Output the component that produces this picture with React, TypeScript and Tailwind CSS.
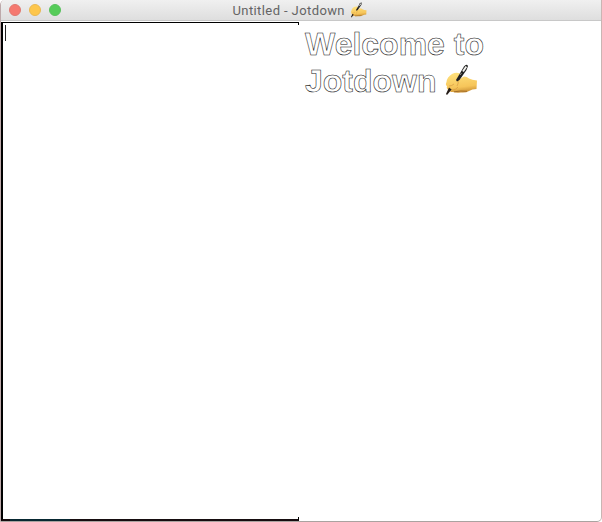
type HandProps = { className?: string; id: string };

function WritingHand({ className, id }: HandProps) {
  return (
    <svg viewBox="0 0 34 32" className={className} strokeWidth="1" aria-label="Writing hand">
      <defs>
        <linearGradient id={id} x1="0.4" y1="0" x2="0.6" y2="1">
          <stop offset="0" stopColor="#ffe17c" />
          <stop offset="0.7" stopColor="#f6c55a" />
          <stop offset="1" stopColor="#c88d32" />
        </linearGradient>
      </defs>
      <path
        d="M2.5 18 Q3 13 8 10 Q12 8 16 9.5 Q18 12 14 15 L12 17 Q17 14 20 12.5 Q23 12.5 25 14.5 Q28 16 33 16.5 L32.5 25 Q28 25 25 27 Q22 29 17 28.5 Q12 29 9 28 Q5 28 5 26 Q2 25 3 22 Q1 21 2.5 18Z"
        fill={`url(#${id})`}
      />
      <path d="M5 22 Q8 22 10 20 M8 26 Q12 26 14 23 M14 16 Q15 19 13 22" fill="none" stroke="#d79b42" strokeWidth="0.7" />
      <path d="M10 27.8 Q17 26.5 23 27.3" fill="none" stroke="#9e6927" strokeWidth="0.9" />
      <path d="M13 17.5 L12 16 L20 2.5 Q22.5 -0.5 24 2 L22.5 6 L15.5 16Z" fill="#202020" />
      <path d="M19 7.5 L22.3 2.5" stroke="#f4f4f0" strokeWidth="1.9" />
      <path d="M17.5 9 L16 11" stroke="#e4e1dc" strokeWidth="0.6" />
      <path d="M5 23.5 L7.6 25.5 L3 31 L2 30Z" fill="#251d18" />
    </svg>
  );
}

export default function App() {
  return (
    <main className="flex h-[522px] w-[602px] flex-col overflow-hidden rounded-tl-[5px] rounded-br-[5px] border-b border-l border-r border-b-[#aaa3a0] border-l-[#bda9aa] border-r-[#c9b5b3] bg-white font-['Liberation_Sans',sans-serif]">
      <header className="grid h-[21px] shrink-0 grid-cols-[1fr_auto_1fr] border-b border-[#c8c8c8] bg-linear-to-b from-[#f0f0f0] to-[#dedede]">
        <div className="flex gap-2 pt-1 pl-2">
          <span className="size-3 rounded-full border border-[#df786f] bg-[#f57970]" />
          <span className="size-3 rounded-full border border-[#e9b850] bg-[#fdc64b]" />
          <span className="size-3 rounded-full border border-[#58c05c] bg-[#55cc59]" />
        </div>
        <div className="-ml-[3px] flex pt-[2px] text-[13px] leading-[17px] text-[#646464]">
          <span className="w-[117px] whitespace-nowrap font-[Roboto,sans-serif] tracking-[0.4px]">Untitled - Jotdown</span>
          <WritingHand className="h-4 w-[17px]" id="titleHand" />
        </div>
      </header>
      <div className="flex min-h-0 flex-1">
        <section className="relative mt-px w-[298px] border-t border-b-2 border-l-2 border-t-black border-b-[#160d10] border-l-black pt-[2px] pl-[2px]">
          <div className="h-4 w-px bg-[#222]" />
          <span className="absolute top-0 right-0 h-[2px] w-px bg-black" />
          <span className="absolute right-0 -bottom-[1px] h-[3px] w-px bg-black" />
          <span className="absolute -bottom-[2px] left-[7px] h-[2px] w-[60px] bg-[#082832]" />
        </section>
        <section className="flex-1 pt-[5px] pl-[6px]">
          <h1 className="text-[32px] leading-[37px] font-bold whitespace-nowrap text-white [-webkit-text-stroke:0.55px_#111]">
            Welcome to
            <span className="flex">
              <span className="w-[139px]">Jotdown</span>
              <WritingHand className="mt-px h-8 w-[34px]" id="headingHand" />
            </span>
          </h1>
        </section>
      </div>
    </main>
  );
}
